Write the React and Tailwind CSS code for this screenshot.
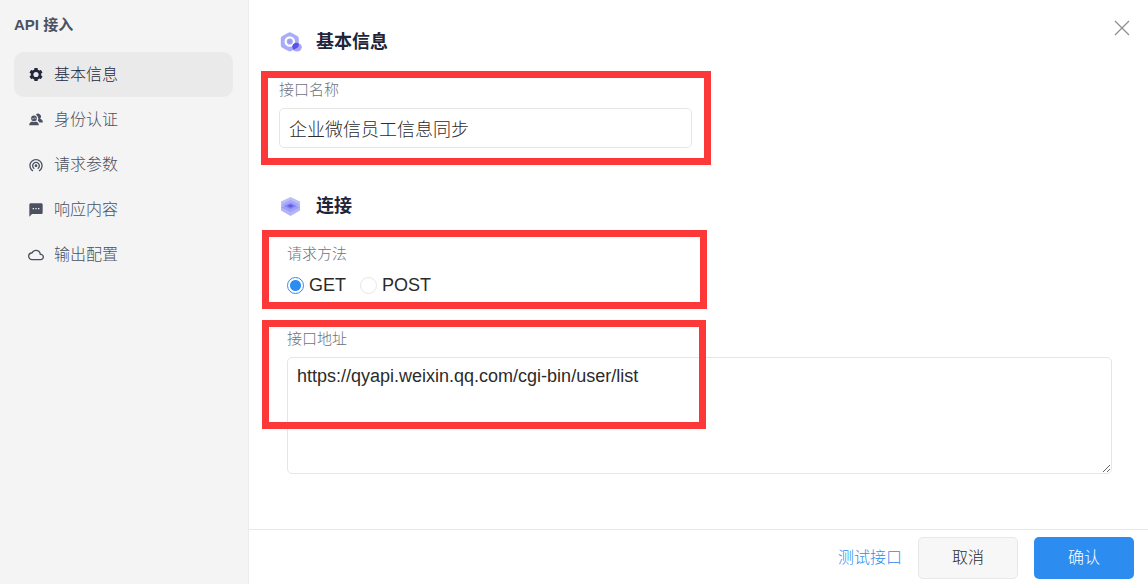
import { useState } from "react";
import { MdWifiTethering, MdTextsms, MdOutlineCloud } from "react-icons/md";

function GearIcon({ className }) {
  return (
    <svg className={className} viewBox="0 0 16 16" aria-hidden="true">
      <circle cx="8" cy="7.500" r="3.900" fill="none" stroke="currentColor" strokeWidth="2.600" />
      <g fill="currentColor">
        <rect x="6.300" y="0.900" width="3.400" height="2.800" rx="0.500" />
        <rect x="6.300" y="0.900" width="3.400" height="2.800" rx="0.500" transform="rotate(60 8 7.500)" />
        <rect x="6.300" y="0.900" width="3.400" height="2.800" rx="0.500" transform="rotate(120 8 7.500)" />
        <rect x="6.300" y="0.900" width="3.400" height="2.800" rx="0.500" transform="rotate(180 8 7.500)" />
        <rect x="6.300" y="0.900" width="3.400" height="2.800" rx="0.500" transform="rotate(240 8 7.500)" />
        <rect x="6.300" y="0.900" width="3.400" height="2.800" rx="0.500" transform="rotate(300 8 7.500)" />
      </g>
    </svg>
  );
}

function PeopleIcon({ className }) {
  return (
    <svg className={className} viewBox="0 0 16 16" fill="currentColor" aria-hidden="true">
      <path d="M7.900 2.700a2.900 2.900 0 1 1 4.200 4c1.700.5 2.700 1.500 2.700 3.300v.5h-3.400c-.3-.8-.9-1.400-1.600-1.800.3-.6.5-1.200.5-2 0-1.800-1-3.200-2.400-4z" />
      <circle cx="6" cy="6.300" r="2.900" />
      <path d="M1.200 13.300c0-2.300 1.200-3.300 2.900-3.800a4 4 0 0 0 3.800 0c1.700.5 2.900 1.500 2.900 3.800z" />
      <path d="M3.600 6.900c1.500 0 2.700-.4 3.300-1.200.4.600 1 .9 1.600 1" fill="none" stroke="#f4f4f4" strokeWidth="0.600" />
    </svg>
  );
}

const NAV = [
  { label: "基本信息", Icon: GearIcon },
  { label: "身份认证", Icon: PeopleIcon },
  { label: "请求参数", Icon: MdWifiTethering },
  { label: "响应内容", Icon: MdTextsms },
  { label: "输出配置", Icon: MdOutlineCloud },
];

function Sidebar() {
  const [active, setActive] = useState(0);
  return (
    <aside className="w-[249px] shrink-0 border-r border-[#ececee] bg-[#f4f4f4] px-[14px] pt-[14px]">
      <h1 className="text-[15px] leading-[22px] font-bold text-[#4b5160]">API 接入</h1>
      <nav className="mt-4 w-[219px]">
        {NAV.map(({ label, Icon }, i) => (
          <button
            key={label}
            type="button"
            onClick={() => setActive(i)}
            className={
              i === active
                ? "flex h-[45px] w-full items-center gap-[10px] rounded-[10px] bg-[#eaeaea] px-[14px] text-[#25283b]"
                : "flex h-[45px] w-full items-center gap-[10px] rounded-[10px] px-[14px] text-[#4b5160]"
            }
          >
            <Icon className="size-4" />
            <span className="text-base leading-6">{label}</span>
          </button>
        ))}
      </nav>
    </aside>
  );
}

function HexagonIcon() {
  return (
    <svg className="size-6" viewBox="0 0 24 24" aria-hidden="true">
      <path d="M9.300 2.700a3 3 0 0 1 3 0l6 3.300a3 3 0 0 1 1.500 2.600v6.600a3 3 0 0 1-1.500 2.600l-6 3.300a3 3 0 0 1-3 0l-6-3.300a3 3 0 0 1-1.500-2.600V8.600A3 3 0 0 1 3.300 6z" fill="#a9acf6" />
      <circle cx="10.800" cy="11.500" r="4.200" fill="none" stroke="#fff" strokeWidth="2.200" />
      <circle cx="10.800" cy="11.500" r="2.200" fill="#9a9df5" />
      <ellipse cx="18" cy="17.300" rx="4.800" ry="4.200" fill="#a9a6fa" />
      <path d="M13.300 16.500c.3-2.300 2.500-4 5-3.600.6.100 1.100.3 1.500.5v1.800a3 3 0 0 1-1.500 2.600l-3.600 2c-.9-.8-1.500-2-1.400-3.300z" fill="#5b50ea" />
    </svg>
  );
}

function LayersIcon() {
  return (
    <svg className="size-6" viewBox="0 0 24 24" aria-hidden="true">
      <path d="M11.500 9l9.500 4.500v3L11.500 22 2 16.500v-3z" fill="#b3b5f8" />
      <path d="M11.500 6L21 10.500v3L11.500 18 2 13.500v-3z" fill="#9396f3" opacity="0.7" />
      <path d="M11.500 3L21 7.500v2.500L11.500 15 2 10V7.500z" fill="#a0a3f6" opacity="0.7" />
      <path d="M11.500 9l6 3-6 3-6-3z" fill="#6f6cee" opacity="0.6" />
      <path d="M11.500 10.500l3 1.500-3 1.500-3-1.500z" fill="#4f49dd" opacity="0.7" />
    </svg>
  );
}

function SectionTitle({ icon, children }) {
  return (
    <h2 className="flex items-center gap-[13px] text-lg leading-6 font-bold text-[#1f2438]">
      {icon}
      {children}
    </h2>
  );
}

function Method({ value, checked, onChange }) {
  return (
    <label className="flex items-center gap-[5px] text-lg leading-6 text-[#2b2b2b]">
      <input
        type="radio"
        name="method"
        value={value}
        checked={checked}
        onChange={() => onChange(value)}
        className="size-[17px] appearance-none rounded-full border border-[#e6e6e6] bg-white checked:border-[#2d8cf0] checked:bg-[radial-gradient(circle,#2d8cf0_0_5px,#fff_6px)]"
      />
      {value}
    </label>
  );
}

export default function App() {
  const [method, setMethod] = useState("GET");
  return (
    <div className="flex min-h-screen bg-white font-['Liberation_Sans','Noto_Sans_CJK_SC',sans-serif] font-light">
      <Sidebar />
      <main className="flex min-w-0 grow flex-col">
        <div className="relative grow pt-[30px] pr-9 pl-[30px]">
          <button type="button" aria-label="关闭" className="absolute top-[17px] right-[15px] p-[2px] text-[#8f8f8f]">
            <svg className="size-[18px]" viewBox="0 0 18 18" fill="none" stroke="currentColor" strokeWidth="1.300" aria-hidden="true">
              <path d="M2 2l14 14M16 2L2 16" />
            </svg>
          </button>

          <SectionTitle icon={<HexagonIcon />}>基本信息</SectionTitle>
          <div className="relative mt-[25px] w-[413px]">
            <label htmlFor="name" className="block text-[15px] leading-[22px] text-[#6c727e]">接口名称</label>
            <input
              id="name"
              defaultValue="企业微信员工信息同步"
              className="mt-[7px] h-10 w-full rounded-[5px] border border-[#e6e6e6] px-[9px] text-lg text-[#2b2b2b] outline-none"
            />
            <div className="pointer-events-none absolute -top-2 -right-[19px] -bottom-[17px] -left-[18px] border-7 border-[#fc3838]" />
          </div>

          <div className="mt-[46px]">
            <SectionTitle icon={<LayersIcon />}>连接</SectionTitle>
          </div>
          <div className="pt-[25px] pl-2">
            <div className="relative w-[413px]">
              <fieldset>
                <legend className="block text-[15px] leading-[22px] text-[#6c727e]">请求方法</legend>
                <div className="mt-2 flex gap-[14px]">
                  <Method value="GET" checked={method === "GET"} onChange={setMethod} />
                  <Method value="POST" checked={method === "POST"} onChange={setMethod} />
                </div>
              </fieldset>
              <div className="pointer-events-none absolute -top-[13px] -right-[7px] -bottom-3 -left-[25px] border-7 border-[#fc3838]" />
            </div>
            <div className="relative mt-[31px]">
              <label htmlFor="url" className="block text-[15px] leading-[22px] text-[#6c727e]">接口地址</label>
              <textarea
                id="url"
                defaultValue="https://qyapi.weixin.qq.com/cgi-bin/user/list"
                className="mt-[7px] block h-[117px] w-full resize rounded-[5px] border border-[#e6e6e6] px-[9px] py-[6px] text-lg leading-6 text-[#2b2b2b] outline-none"
              />
              <div className="pointer-events-none absolute -top-2 -left-[25px] h-[109px] w-[444px] border-7 border-[#fc3838]" />
            </div>
          </div>
        </div>

        <footer className="flex items-center justify-end gap-4 border-t border-[#e8e8e8] pt-[7px] pr-[14px] pb-[5px] text-base">
          <button type="button" className="text-[#2d8cf0]">测试接口</button>
          <button type="button" className="h-[42px] w-[100px] rounded-[5px] border border-[#e8e8e8] bg-[#f7f7f7] text-[#2b2b2b]">取消</button>
          <button type="button" className="h-[42px] w-[100px] rounded-[5px] bg-[#2d8cf0] text-white">确认</button>
        </footer>
      </main>
    </div>
  );
}
